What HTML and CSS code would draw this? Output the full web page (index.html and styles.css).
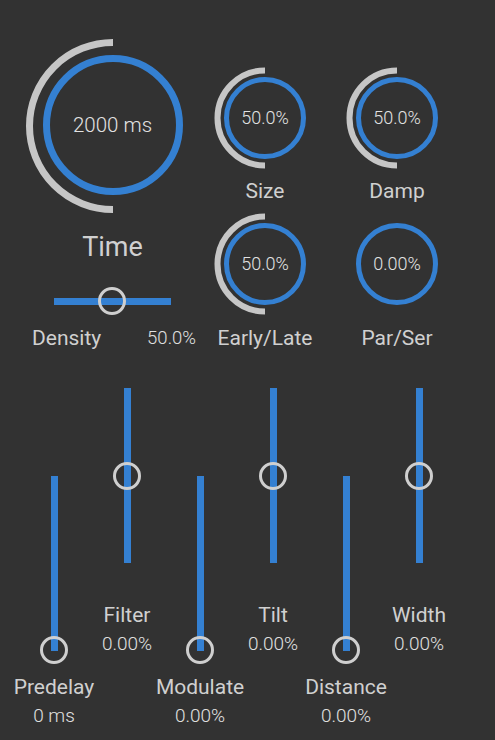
FILE: index.html
```html
<!DOCTYPE html>
<html>
<head>
<meta charset="utf-8">
<link rel="stylesheet" href="styles.css">
</head>
<body>
<div class="panel">
  <div class="top">
    <div class="left">
      <div class="knob big">
        <svg class="dial" width="180" height="180" viewBox="0 0 180 180">
          <path class="arc" d="M90 173.5 A83.5 83.5 0 0 1 90 6.5" stroke-width="7"/>
          <circle class="ring" cx="90" cy="89" r="66.5" stroke-width="7"/>
        </svg>
        <span class="kval big-val">2000 ms</span>
      </div>
      <div class="time">Time</div>
      <div class="hslider">
        <div class="htrack"></div>
        <div class="hthumb"></div>
      </div>
      <div class="density">
        <span class="dlabel">Density</span>
        <span class="dval">50.0%</span>
      </div>
    </div>
    <div class="knobs">
      <div class="cell">
        <div class="knob small">
          <svg class="dial" width="104" height="104" viewBox="0 0 104 104">
            <path class="arc" d="M52 99.5 A47.5 47.5 0 0 1 52 4.5" stroke-width="6"/>
            <circle class="ring" cx="52" cy="52" r="38.5" stroke-width="5"/>
          </svg>
          <span class="kval">50.0%</span>
        </div>
        <div class="klabel">Size</div>
      </div>
      <div class="cell">
        <div class="knob small">
          <svg class="dial" width="104" height="104" viewBox="0 0 104 104">
            <path class="arc" d="M52 99.5 A47.5 47.5 0 0 1 52 4.5" stroke-width="6"/>
            <circle class="ring" cx="52" cy="52" r="38.5" stroke-width="5"/>
          </svg>
          <span class="kval">50.0%</span>
        </div>
        <div class="klabel">Damp</div>
      </div>
      <div class="cell">
        <div class="knob small">
          <svg class="dial" width="104" height="104" viewBox="0 0 104 104">
            <path class="arc" d="M52 99.5 A47.5 47.5 0 0 1 52 4.5" stroke-width="6"/>
            <circle class="ring" cx="52" cy="52" r="38.5" stroke-width="5"/>
          </svg>
          <span class="kval">50.0%</span>
        </div>
        <div class="klabel">Early/Late</div>
      </div>
      <div class="cell">
        <div class="knob small">
          <svg class="dial" width="104" height="104" viewBox="0 0 104 104">
            <circle class="ring" cx="52" cy="52" r="38.5" stroke-width="5"/>
          </svg>
          <span class="kval">0.00%</span>
        </div>
        <div class="klabel">Par/Ser</div>
      </div>
    </div>
  </div>

  <div class="sliders">
    <div class="vcol low">
      <div class="vslider"><div class="vtrack"></div><div class="vthumb at-bottom"></div></div>
      <div class="slabel">Predelay</div>
      <div class="sval">0 ms</div>
    </div>
    <div class="vcol high">
      <div class="vslider"><div class="vtrack"></div><div class="vthumb at-mid"></div></div>
      <div class="slabel">Filter</div>
      <div class="sval">0.00%</div>
    </div>
    <div class="vcol low">
      <div class="vslider"><div class="vtrack"></div><div class="vthumb at-bottom"></div></div>
      <div class="slabel">Modulate</div>
      <div class="sval">0.00%</div>
    </div>
    <div class="vcol high">
      <div class="vslider"><div class="vtrack"></div><div class="vthumb at-mid"></div></div>
      <div class="slabel">Tilt</div>
      <div class="sval">0.00%</div>
    </div>
    <div class="vcol low">
      <div class="vslider"><div class="vtrack"></div><div class="vthumb at-bottom"></div></div>
      <div class="slabel">Distance</div>
      <div class="sval">0.00%</div>
    </div>
    <div class="vcol high">
      <div class="vslider"><div class="vtrack"></div><div class="vthumb at-mid"></div></div>
      <div class="slabel">Width</div>
      <div class="sval">0.00%</div>
    </div>
  </div>
</div>
</body>
</html>
```

FILE: styles.css
```css
html, body {
  margin: 0;
  padding: 0;
  background: #323232;
}
body {
  width: 495px;
  height: 740px;
  overflow: hidden;
  font-family: Roboto, "Liberation Sans", sans-serif;
  color: #d0d0d0;
}
.panel {
  display: flex;
  flex-direction: column;
}
.top {
  display: flex;
  height: 351px;
}
.left {
  width: 225px;
  padding-top: 36px;
  display: flex;
  flex-direction: column;
  align-items: center;
}
.knob {
  position: relative;
  display: flex;
  align-items: center;
  justify-content: center;
}
.dial { display: block; }
.arc {
  fill: none;
  stroke: #c6c6c6;
}
.ring {
  fill: none;
  stroke: #3480d2;
}
.kval {
  position: absolute;
  left: 0;
  right: 0;
  top: 50%;
  transform: translateY(-50%);
  text-align: center;
  font-size: 18px;
  font-weight: 300;
  line-height: 22px;
  color: #e2e2e2;
}
.big-val {
  font-size: 20.5px;
  font-weight: 300;
  line-height: 24px;
  margin-top: -1px;
}
.time {
  margin-top: 15px;
  font-size: 27px;
  line-height: 32px;
  height: 32px;
}
.hslider {
  position: relative;
  margin-top: 24px;
  width: 117px;
  height: 28px;
  align-self: flex-start;
  margin-left: 54px;
}
.htrack {
  position: absolute;
  left: 0;
  right: 0;
  top: 11px;
  height: 7px;
  background: #3480d2;
}
.hthumb {
  position: absolute;
  left: 44px;
  top: 0;
  width: 22px;
  height: 22px;
  border: 3px solid #cfcfcf;
  border-radius: 50%;
}
.density {
  margin-top: 10px;
  align-self: stretch;
  display: flex;
  justify-content: space-between;
  align-items: center;
  padding-left: 32px;
  padding-right: 29px;
  height: 26px;
}
.dlabel {
  font-size: 21px;
  line-height: 26px;
}
.dval {
  font-size: 18.5px;
  font-weight: 300;
  line-height: 26px;
  color: #e0e0e0;
}
.knobs {
  padding-top: 65.5px;
  margin-left: -15px;
  display: grid;
  grid-template-columns: 110px 110px;
  column-gap: 22px;
  row-gap: 8px;
  align-content: start;
}
.cell {
  display: flex;
  flex-direction: column;
  align-items: center;
}
.klabel {
  margin-top: 8.5px;
  font-size: 21px;
  line-height: 26px;
  height: 26px;
  white-space: nowrap;
}
.sliders {
  display: flex;
  align-items: flex-start;
  padding-left: 17.5px;
  margin-top: 37px;
}
.vcol {
  width: 73px;
  display: flex;
  flex-direction: column;
  align-items: center;
}
.vcol.low { margin-top: 88px; }
.vslider {
  position: relative;
  width: 28px;
  height: 175px;
  display: flex;
  justify-content: center;
}
.vtrack {
  width: 7px;
  height: 175px;
  background: #3480d2;
}
.vthumb {
  position: absolute;
  left: 0;
  width: 22px;
  height: 22px;
  border: 3px solid #cfcfcf;
  border-radius: 50%;
}
.vthumb.at-mid { top: 74px; }
.vthumb.at-bottom { top: 160px; }
.slabel {
  font-size: 21px;
  line-height: 26px;
  height: 26px;
  white-space: nowrap;
}
.high .slabel { margin-top: 39px; }
.low .slabel { margin-top: 23px; }
.sval {
  margin-top: 4px;
  font-size: 19px;
  font-weight: 300;
  line-height: 24px;
  color: #e0e0e0;
  white-space: nowrap;
}
```
